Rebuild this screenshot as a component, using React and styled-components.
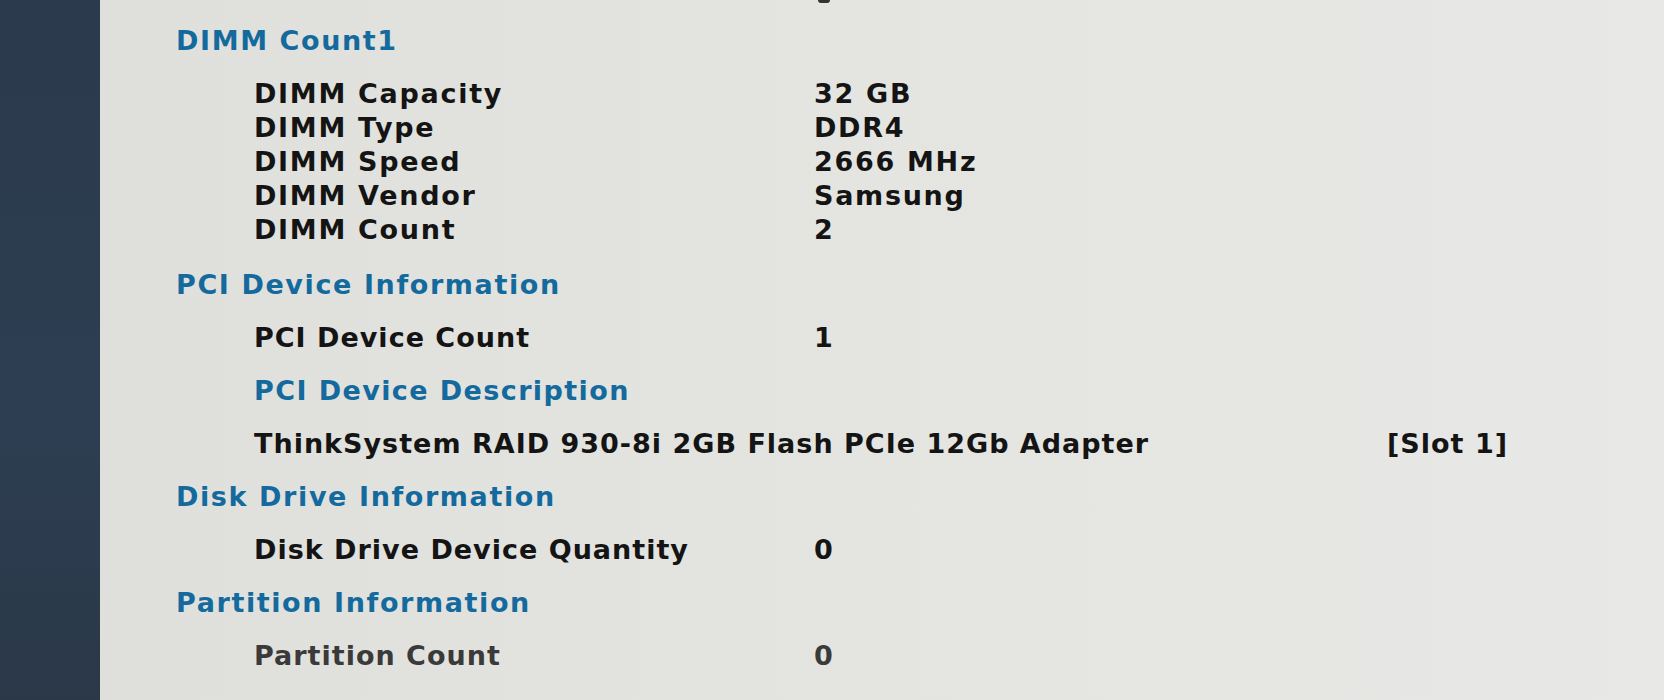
import React from "react"
import styled, { createGlobalStyle } from "styled-components"

const GlobalStyle = createGlobalStyle`
  html, body {
    margin: 0;
    padding: 0;
    background: #e2e3df;
  }
  body {
    font-family: "DejaVu Sans", Verdana, sans-serif;
    overflow: hidden;
  }
`

const sections = [
  {
    title: "DIMM Count1",
    dense: true,
    items: [
      { label: "DIMM Capacity", value: "32 GB" },
      { label: "DIMM Type", value: "DDR4" },
      { label: "DIMM Speed", value: "2666 MHz" },
      { label: "DIMM Vendor", value: "Samsung" },
      { label: "DIMM Count", value: "2" },
    ],
  },
  {
    title: "PCI Device Information",
    items: [{ label: "PCI Device Count", value: "1" }],
    sub: {
      title: "PCI Device Description",
      device: "ThinkSystem RAID 930-8i 2GB Flash PCIe 12Gb Adapter",
      slot: "[Slot 1]",
    },
  },
  {
    title: "Disk Drive Information",
    items: [{ label: "Disk Drive Device Quantity", value: "0" }],
  },
  {
    title: "Partition Information",
    items: [{ label: "Partition Count", value: "0", dim: true }],
  },
]

export default function App() {
  return (
    <>
      <GlobalStyle />
      <Screen>
        <Sidebar />
        <Panel>
          <TopMark />
          {sections.map((s) => (
            <Section key={s.title}>
              <Heading>{s.title}</Heading>
              <ItemList $dense={s.dense}>
                {s.items.map((it) => (
                  <Row key={it.label} $dense={s.dense} $dim={it.dim}>
                    <Label>{it.label}</Label>
                    <Value>{it.value}</Value>
                  </Row>
                ))}
                {s.sub && (
                  <>
                    <SubHeading>{s.sub.title}</SubHeading>
                    <DeviceRow>
                      <span>{s.sub.device}</span>
                      <span>{s.sub.slot}</span>
                    </DeviceRow>
                  </>
                )}
              </ItemList>
            </Section>
          ))}
        </Panel>
      </Screen>
    </>
  )
}

const Screen = styled.div`
  display: flex;
  width: 1664px;
  height: 700px;
  overflow: hidden;
`

const Sidebar = styled.div`
  width: 100px;
  flex-shrink: 0;
  background: linear-gradient(180deg, #2b3a4c 0%, #2e3e52 60%, #2a3848 100%);
`

const Panel = styled.div`
  position: relative;
  flex: 1;
  padding: 14px 0 0 76px;
  background: linear-gradient(90deg, #dfe0dc 0%, #e4e5e1 50%, #e8e9e6 100%);
  font-weight: bold;
  font-size: 27px;
  letter-spacing: 1px;
  color: #141414;
`

const TopMark = styled.div`
  position: absolute;
  left: 718px;
  top: 0;
  width: 12px;
  height: 3px;
  background: #333;
  border-radius: 0 0 4px 4px;
`

const Section = styled.div`
  display: flex;
  flex-direction: column;
`

const Heading = styled.div`
  height: 53px;
  line-height: 53px;
  color: #146a9d;
  letter-spacing: 1.6px;
  white-space: nowrap;
`

const ItemList = styled.div`
  display: flex;
  flex-direction: column;
  padding-left: 78px;
  padding-top: ${(p) => (p.$dense ? "10px" : "0")};
  padding-bottom: ${(p) => (p.$dense ? "11px" : "0")};
`

const Row = styled.div`
  display: grid;
  grid-template-columns: 560px auto;
  height: ${(p) => (p.$dense ? "34px" : "53px")};
  line-height: ${(p) => (p.$dense ? "34px" : "53px")};
  letter-spacing: ${(p) => (p.$dense ? "1.7px" : "1px")};
  color: ${(p) => (p.$dim ? "#3a3a3a" : "#141414")};
  white-space: nowrap;
`

const Label = styled.span``

const Value = styled.span``

const SubHeading = styled.div`
  height: 53px;
  line-height: 53px;
  color: #146a9d;
  letter-spacing: 1.4px;
`

const DeviceRow = styled.div`
  display: grid;
  grid-template-columns: 1133px auto;
  height: 53px;
  line-height: 53px;
  white-space: nowrap;
`
